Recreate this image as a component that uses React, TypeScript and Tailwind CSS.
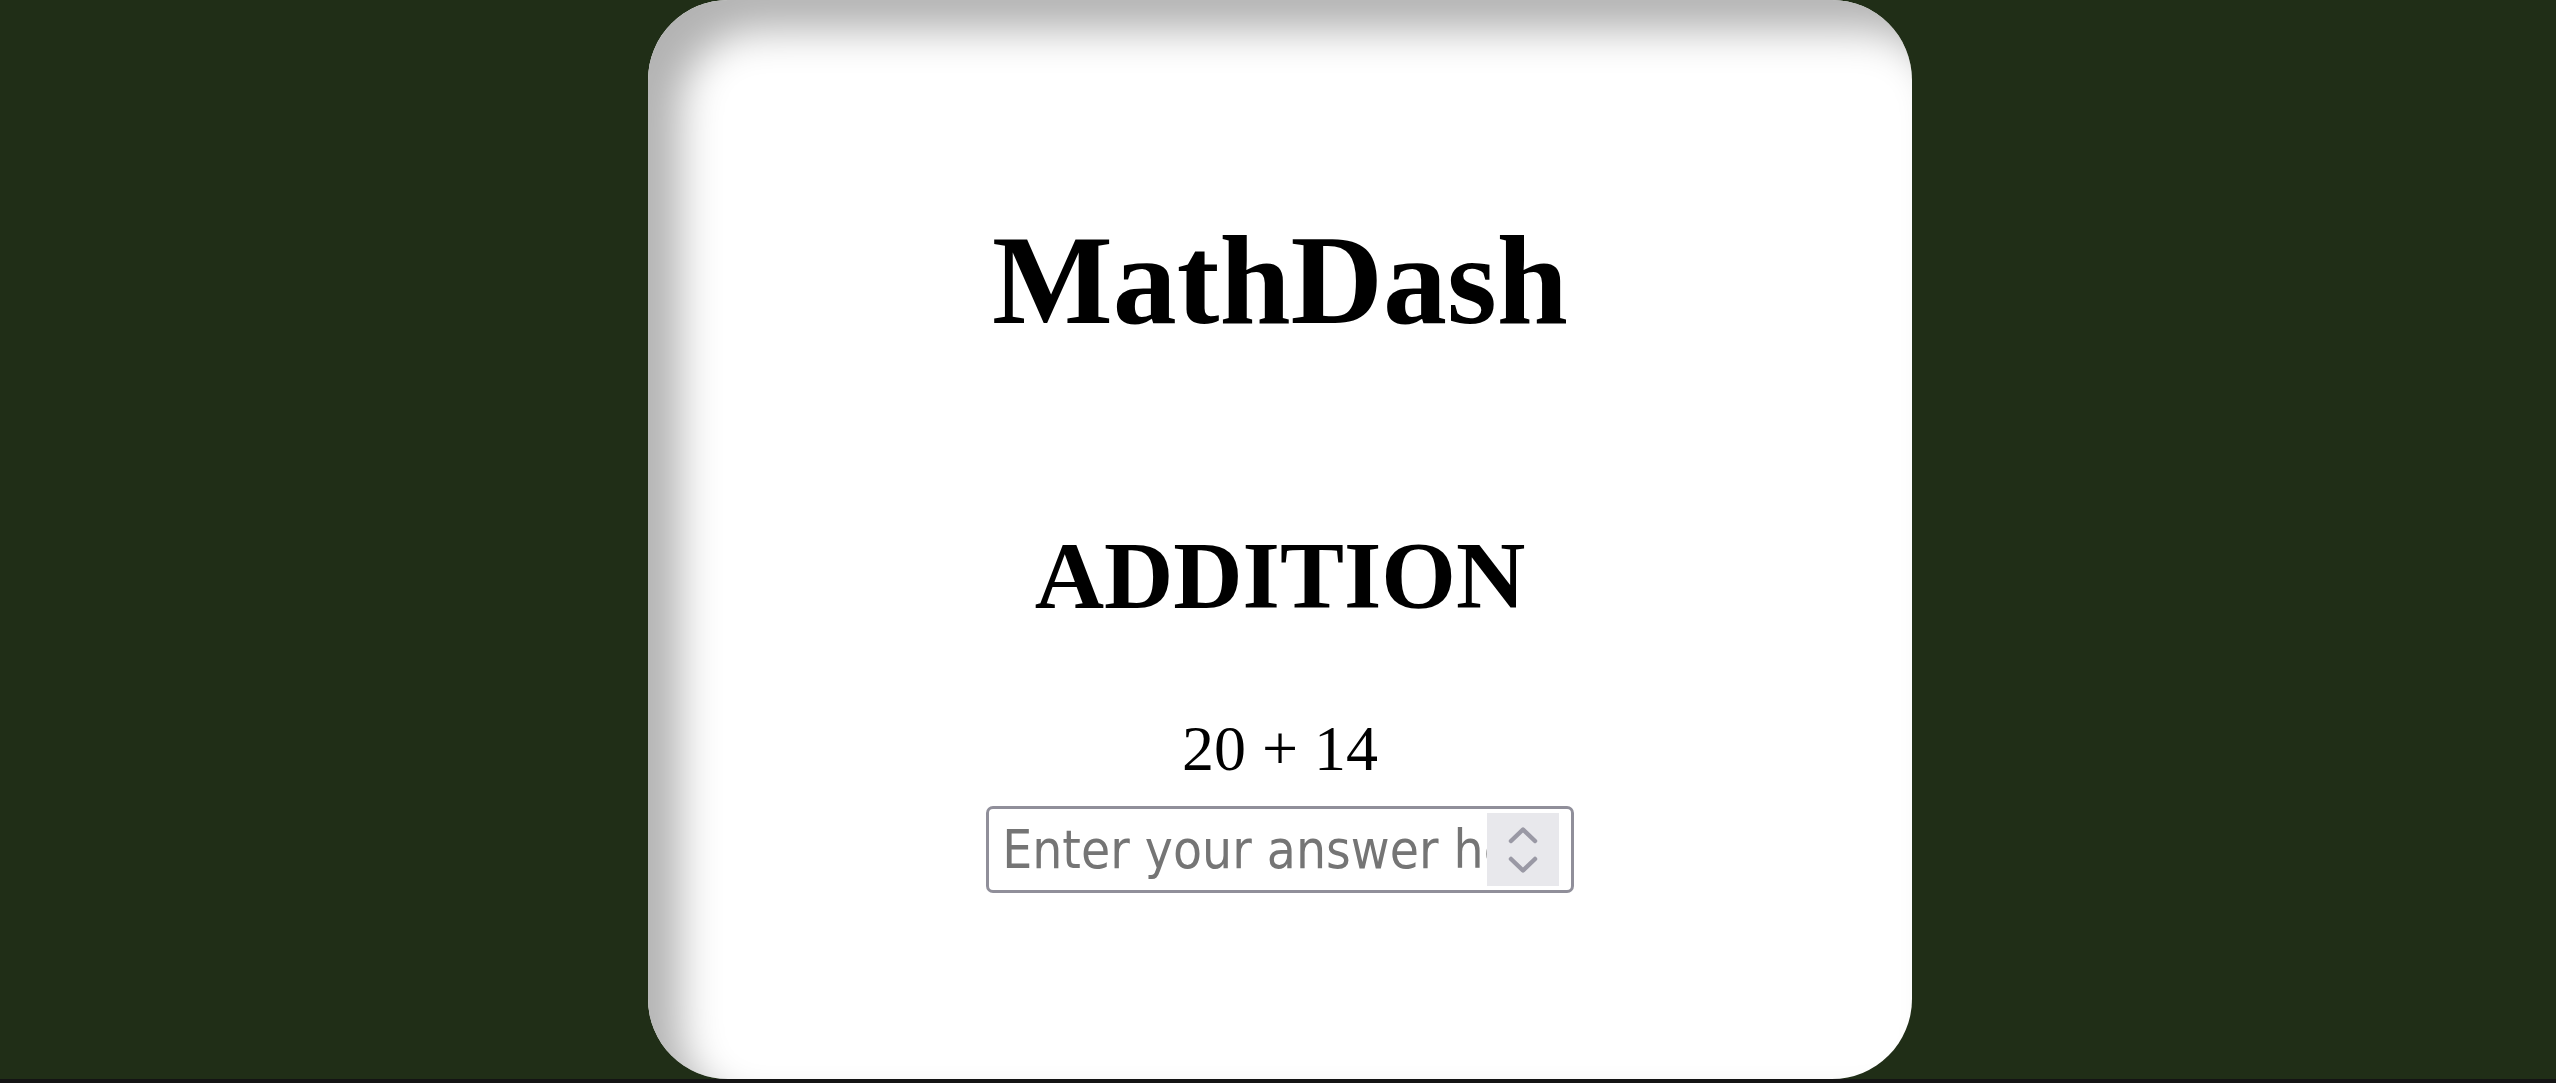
import React from "react";

export default function App() {
  return (
    <div className="w-[2556px] h-[1083px] bg-[#202e17] flex flex-col overflow-hidden">
      <div className="flex justify-center h-[1079px]">
        <div className="ml-[4px] w-[1264px] h-[1079px] bg-white rounded-[80px] shadow-[inset_32px_30px_40px_#b3b3b3] flex flex-col items-center pt-[216px]">
          <h1
            className="text-[128px] leading-[128px] font-bold text-black whitespace-nowrap"
            style={{ fontFamily: '"Liberation Serif", "Times New Roman", serif' }}
          >
            MathDash
          </h1>
          <h2
            className="mt-[184px] text-[96px] leading-[96px] font-bold text-black whitespace-nowrap"
            style={{ fontFamily: '"Liberation Serif", "Times New Roman", serif' }}
          >
            ADDITION
          </h2>
          <p
            className="mt-[93px] text-[64px] leading-[64px] text-black whitespace-nowrap"
            style={{ fontFamily: '"Liberation Serif", "Times New Roman", serif' }}
          >
            20 + 14
          </p>
          <div className="mt-[25px] w-[588px] h-[87px] border-[3px] border-[#908f9a] rounded-[7px] flex items-stretch bg-white">
            <div className="w-[498px] overflow-hidden flex items-center">
              <input
                type="text"
                placeholder="Enter your answer here"
                className="w-[566px] shrink-0 h-[80px] pl-[15px] text-[54px] outline-none bg-transparent placeholder:text-[#757575] origin-left scale-x-[0.88]"
                style={{ fontFamily: '"DejaVu Sans", Verdana, sans-serif' }}
              />
            </div>
            <div className="w-[72px] my-[4px] bg-[#e8e8ec] flex flex-col items-center justify-center gap-[12px]">
              <svg width="30" height="18" viewBox="0 0 30 18" fill="none">
                <path d="M3 15 L15 3.5 L27 15" stroke="#9a99a5" strokeWidth="4.5" strokeLinecap="round" strokeLinejoin="round" />
              </svg>
              <svg width="30" height="18" viewBox="0 0 30 18" fill="none">
                <path d="M3 3 L15 14.5 L27 3" stroke="#9a99a5" strokeWidth="4.5" strokeLinecap="round" strokeLinejoin="round" />
              </svg>
            </div>
          </div>
        </div>
      </div>
      <div className="h-[4px] bg-[#141414]" />
    </div>
  );
}
